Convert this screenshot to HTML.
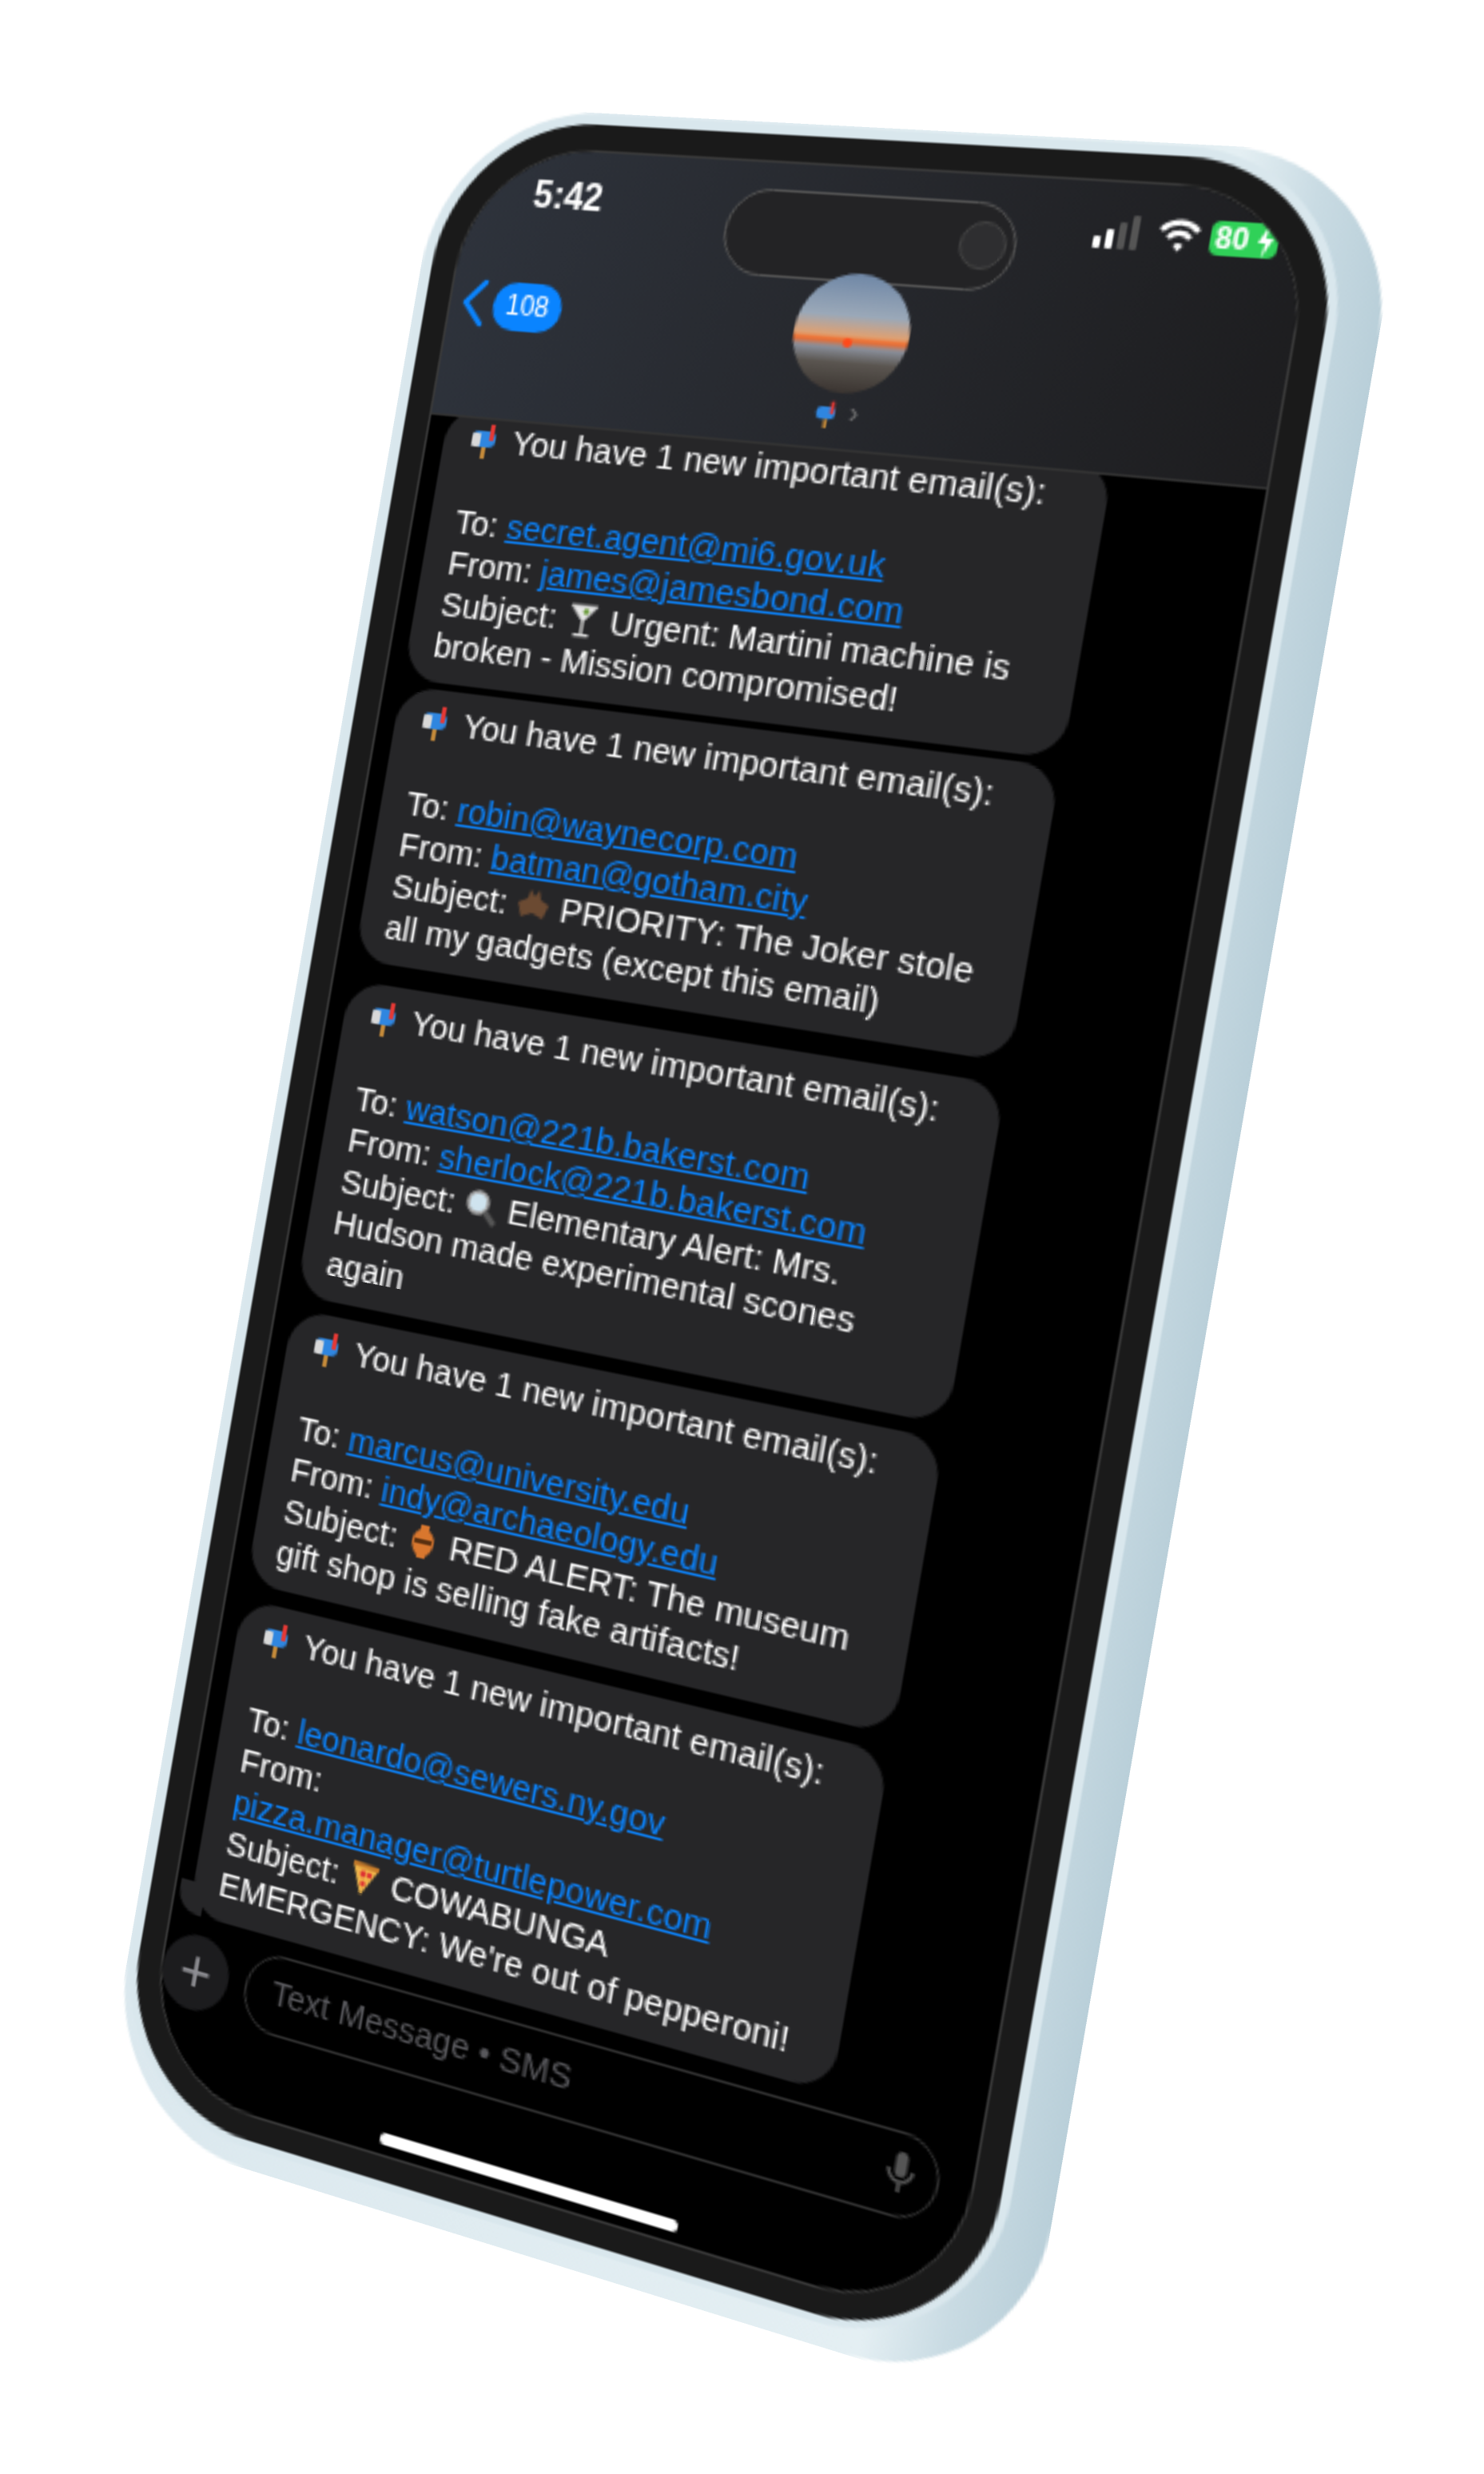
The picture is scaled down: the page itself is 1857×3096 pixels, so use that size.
<!DOCTYPE html>
<html><head><meta charset="utf-8">
<style>
html,body{margin:0;padding:0;background:#fff;}
body{width:1857px;height:3096px;overflow:hidden;position:relative;font-family:"Liberation Sans",sans-serif;}
#ph{position:absolute;left:0;top:0;width:393px;height:852px;transform-origin:0 0;
transform:matrix3d(2.47343,0.10335,0,-0.0002528,-0.49201,2.83782,0,0,0,0,1,0,553.43,180.0,0,1);}
.abs{position:absolute;}
.body{left:0;top:-17px;width:412px;height:890px;border-radius:72px;background:linear-gradient(90deg,#dbe8ee 0%,#e4eff3 84%,#c9dbe3 92%,#b9cfd9 100%);}
.face{left:1px;top:-16px;width:394px;height:880px;border-radius:70px;background:#d9e7ed;}
.bezel{left:5px;top:-12px;width:386px;height:873px;border-radius:66px;background:#1a1a1a;}
.screen{left:16px;top:-1px;width:364px;height:852px;border-radius:56px;background:#000;overflow:hidden;border:1px solid #3a3a3a;box-sizing:border-box;}
.hdr{left:0;top:0;width:364px;height:117px;background:linear-gradient(100deg,#2e333c 0%,#26282d 50%,#1d1d1f 100%);border-bottom:1px solid #333;}
.bub{position:absolute;left:8px;width:292px;background:#262628;border-radius:17px;padding:6px 12px;box-sizing:border-box;color:#fff;font-size:15px;line-height:18px;white-space:nowrap;}
.bub a{color:#0a84ff;text-decoration:underline;}
.ic{display:inline-block;width:16px;height:16px;vertical-align:-3px;margin-right:4px;}
</style></head><body>
<div id="ph">
 <div class="abs body"></div>
 <div class="abs face"></div>
 <div class="abs bezel"></div>
 <div class="abs screen">
  <div class="bub" style="top:113px;">
   <svg class="ic" viewBox="0 0 16 16"><rect x="1" y="4" width="11" height="7" rx="3" fill="#2f86e0"/><rect x="1" y="5" width="4" height="6" rx="1" fill="#d8d8d8"/><rect x="6" y="11" width="2" height="5" fill="#c48a3a"/><rect x="9" y="1" width="2" height="7" fill="#e53935"/></svg>You have 1 new important email(s):<br>&nbsp;<br>
   To: <a>secret.agent@mi6.gov.uk</a><br>
   From: <a>james@jamesbond.com</a><br>
   Subject: <svg class="ic" viewBox="0 0 16 16"><path d="M2 2 L14 2 L8 9 Z" fill="#e8e8e8" stroke="#bbb" stroke-width="0.8"/><rect x="7.4" y="9" width="1.2" height="5" fill="#ddd"/><rect x="4.5" y="14" width="7" height="1.3" fill="#ddd"/><circle cx="9" cy="4.5" r="1.3" fill="#6a9a3a"/></svg>Urgent: Martini machine is<br>
   broken - Mission compromised!
  </div>
  <div class="bub" style="top:236px;">
   <svg class="ic" viewBox="0 0 16 16"><rect x="1" y="4" width="11" height="7" rx="3" fill="#2f86e0"/><rect x="1" y="5" width="4" height="6" rx="1" fill="#d8d8d8"/><rect x="6" y="11" width="2" height="5" fill="#c48a3a"/><rect x="9" y="1" width="2" height="7" fill="#e53935"/></svg>You have 1 new important email(s):<br>&nbsp;<br>
   To: <a>robin@waynecorp.com</a><br>
   From: <a>batman@gotham.city</a><br>
   Subject: <svg class="ic" viewBox="0 0 16 16"><path d="M8 4 L6 1 L5 5 L1 7 L3 13 L8 11 L13 13 L15 7 L11 5 L10 1 Z" fill="#6b4a32"/></svg>PRIORITY: The Joker stole<br>
   all my gadgets (except this email)
  </div>
  <div class="bub" style="top:365px;">
   <svg class="ic" viewBox="0 0 16 16"><rect x="1" y="4" width="11" height="7" rx="3" fill="#2f86e0"/><rect x="1" y="5" width="4" height="6" rx="1" fill="#d8d8d8"/><rect x="6" y="11" width="2" height="5" fill="#c48a3a"/><rect x="9" y="1" width="2" height="7" fill="#e53935"/></svg>You have 1 new important email(s):<br>&nbsp;<br>
   To: <a>watson@221b.bakerst.com</a><br>
   From: <a>sherlock@221b.bakerst.com</a><br>
   Subject: <svg class="ic" viewBox="0 0 16 16"><circle cx="6.5" cy="6.5" r="4.5" fill="#cfe3ee" stroke="#aaa" stroke-width="1.5"/><path d="M10 10 L15 15" stroke="#555" stroke-width="2.5"/></svg>Elementary Alert: Mrs.<br>
   Hudson made experimental scones<br>
   again
  </div>
  <div class="bub" style="top:509px;">
   <svg class="ic" viewBox="0 0 16 16"><rect x="1" y="4" width="11" height="7" rx="3" fill="#2f86e0"/><rect x="1" y="5" width="4" height="6" rx="1" fill="#d8d8d8"/><rect x="6" y="11" width="2" height="5" fill="#c48a3a"/><rect x="9" y="1" width="2" height="7" fill="#e53935"/></svg>You have 1 new important email(s):<br>&nbsp;<br>
   To: <a>marcus@university.edu</a><br>
   From: <a>indy@archaeology.edu</a><br>
   Subject: <svg class="ic" viewBox="0 0 16 16"><path d="M6 1 L10 1 L10 3 C14 5 14 11 10 14 L10 15 L6 15 L6 14 C2 11 2 5 6 3 Z" fill="#d9772e"/><rect x="4" y="7" width="8" height="2" fill="#5a3010"/></svg>RED ALERT: The museum<br>
   gift shop is selling fake artifacts!
  </div>
  <div class="bub" style="top:636px;">
   <svg class="ic" viewBox="0 0 16 16"><rect x="1" y="4" width="11" height="7" rx="3" fill="#2f86e0"/><rect x="1" y="5" width="4" height="6" rx="1" fill="#d8d8d8"/><rect x="6" y="11" width="2" height="5" fill="#c48a3a"/><rect x="9" y="1" width="2" height="7" fill="#e53935"/></svg>You have 1 new important email(s):<br>&nbsp;<br>
   To: <a>leonardo@sewers.ny.gov</a><br>
   From:<br>
   <a>pizza.manager@turtlepower.com</a><br>
   Subject: <svg class="ic" viewBox="0 0 16 16"><path d="M2 2 L14 3 L7 15 Z" fill="#f2b84b"/><path d="M2 2 L14 3" stroke="#c47a2a" stroke-width="2"/><circle cx="7" cy="6" r="1.4" fill="#d33"/><circle cx="10" cy="6" r="1.2" fill="#d33"/><circle cx="7.5" cy="10" r="1.2" fill="#d33"/></svg>COWABUNGA<br>
   EMERGENCY: We're out of pepperoni!
  </div>
  <div class="abs" style="left:2px;top:760px;width:12px;height:14px;background:#262628;border-radius:0 0 0 10px;"></div>

  <div class="abs hdr">
   <div class="abs" style="left:119px;top:11px;width:126px;height:37px;border-radius:19px;background:#232325;border:1px solid #555;box-sizing:border-box;"></div>
   <div class="abs" style="left:221px;top:19px;width:20px;height:20px;border-radius:50%;background:#2e2e30;border:1px solid #444;box-sizing:border-box;"></div>
   <div class="abs" style="left:26px;top:12px;width:40px;text-align:center;color:#fff;font-size:16px;font-weight:bold;">5:42</div>
   <div class="abs" style="left:276px;top:22px;width:3px;height:5px;background:#fff;border-radius:1px;"></div>
   <div class="abs" style="left:281px;top:19px;width:3px;height:8px;background:#fff;border-radius:1px;"></div>
   <div class="abs" style="left:286px;top:16px;width:3px;height:11px;background:#555;border-radius:1px;"></div>
   <div class="abs" style="left:291px;top:13px;width:3px;height:14px;background:#555;border-radius:1px;"></div>
   <svg class="abs" style="left:302px;top:13px;width:17px;height:14px;" viewBox="0 0 17 14"><path d="M1 5 A10 10 0 0 1 16 5" stroke="#fff" stroke-width="2.2" fill="none"/><path d="M4 8 A6 6 0 0 1 13 8" stroke="#fff" stroke-width="2.2" fill="none"/><path d="M6.5 11 L8.5 13.5 L10.5 11 A3 3 0 0 0 6.5 11Z" fill="#fff"/></svg>
   <div class="abs" style="left:323px;top:13px;width:27px;height:14px;border-radius:4px;background:#30d158;color:#fff;font-size:12px;font-weight:bold;line-height:14px;padding-left:2px;box-sizing:border-box;">80</div>
   <svg class="abs" style="left:341px;top:13px;width:8px;height:14px;" viewBox="0 0 8 14"><path d="M5 0 L1 8 L4 8 L3 14 L7 6 L4 6 Z" fill="#fff"/></svg>
   <svg class="abs" style="left:5px;top:57px;width:12px;height:22px;" viewBox="0 0 12 22"><path d="M10 2 L2 11 L10 20" stroke="#0a84ff" stroke-width="2.5" fill="none" stroke-linecap="round" stroke-linejoin="round"/></svg>
   <div class="abs" style="left:20px;top:58px;width:32px;height:21px;border-radius:11px;background:#0a84ff;color:#fff;font-size:12px;line-height:21px;text-align:center;">108</div>
   <div class="abs" style="left:157px;top:44px;width:50px;height:50px;border-radius:50%;overflow:hidden;background:linear-gradient(180deg,#6f87a6 0%,#9aa8b8 35%,#e0a070 52%,#f06a2a 56%,#8a8f9a 62%,#5a5550 75%,#3a3430 100%);"></div>
   <div class="abs" style="left:179px;top:71px;width:4px;height:4px;border-radius:50%;background:#ff4a1a;"></div>
   <svg class="abs" style="left:172px;top:96px;width:12px;height:14px;" viewBox="0 0 16 16"><rect x="1" y="4" width="11" height="7" rx="3" fill="#2f86e0"/><rect x="6" y="11" width="2" height="5" fill="#c48a3a"/><rect x="9" y="1" width="2" height="7" fill="#e53935"/></svg>
   <div class="abs" style="left:187px;top:95px;color:#777;font-size:12px;">›</div>
  </div>

  <div class="abs" style="left:0px;top:782px;width:32px;height:32px;border-radius:50%;background:#1c1c1e;color:#8e8e93;font-size:26px;line-height:30px;text-align:center;">+</div>
  <div class="abs" style="left:40px;top:781px;width:309px;height:34px;border-radius:17px;border:1px solid #333;box-sizing:border-box;color:#58585c;font-size:15px;line-height:32px;padding-left:12px;">Text Message • SMS</div>
  <svg class="abs" style="left:327px;top:788px;width:12px;height:18px;" viewBox="0 0 12 18"><rect x="3.5" y="1" width="5" height="10" rx="2.5" fill="#555"/><path d="M1 8 A5 5 0 0 0 11 8 M6 13 L6 17" stroke="#555" stroke-width="1.5" fill="none"/></svg>
  <div class="abs" style="left:113px;top:841px;width:134px;height:5px;border-radius:3px;background:#fff;"></div>
 </div>
</div>
</body></html>
